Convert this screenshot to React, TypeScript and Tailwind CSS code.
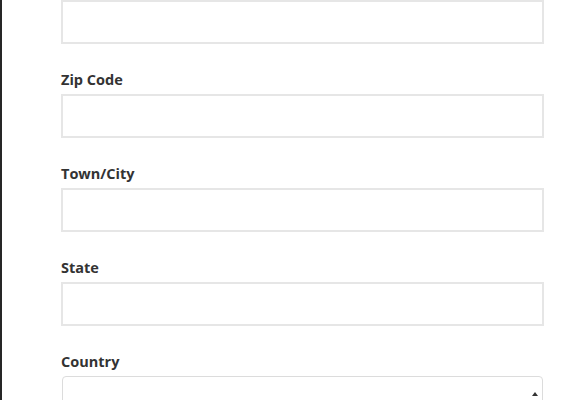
import React from 'react'

const FIELDS = ['Zip Code', 'Town/City', 'State']

function TextField({ label }: { label?: string }) {
  return (
    <div className="mb-[27px]">
      {label && (
        <label className="block h-[18px] mb-[5px] text-[14.5px] leading-[18px] font-bold text-[#333]">{label}</label>
      )}
      <input type="text" className="block w-[483px] h-[44px] border-2 border-[#e6e6e6] bg-white outline-none" />
    </div>
  )
}

export default function App() {
  return (
    <div
      className="h-[400px] overflow-hidden bg-white border-l-2 border-[#262626] pl-[59px]"
      style={{ fontFamily: '"Open Sans", "Liberation Sans", sans-serif' }}
    >
      <TextField />
      {FIELDS.map((f) => (
        <TextField key={f} label={f} />
      ))}
      <div>
        <label className="block h-[18px] mb-[5px] text-[14.5px] leading-[18px] font-bold text-[#333]">Country</label>
        <div className="relative ml-px w-[481px] h-[44px] border border-[#dcdcdc] rounded-[4px] bg-white">
          <svg className="absolute right-[4px] top-[15px]" width="6" height="12" viewBox="0 0 6 12">
            <path d="M3 0 L6 4 L0 4 Z" fill="#333" />
            <path d="M3 12 L6 8 L0 8 Z" fill="#333" />
          </svg>
        </div>
      </div>
    </div>
  )
}
